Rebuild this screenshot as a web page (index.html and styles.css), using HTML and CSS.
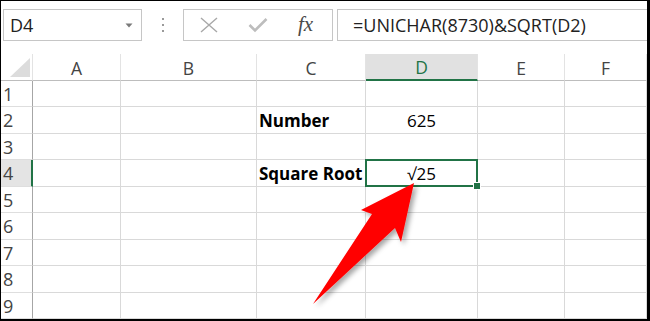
FILE: index.html
```html
<!DOCTYPE html>
<html>
<head>
<meta charset="utf-8">
<link rel="stylesheet" href="styles.css">
</head>
<body>
<div class="frame">
  <div class="app">
    <div class="toolbar">
      <div class="namebox">
        <span class="name">D4</span>
        <svg class="caret" width="8" height="5" viewBox="0 0 8 5"><path d="M0.5 0.5 L7.5 0.5 L4 4.5 Z" fill="#7a7a7a"/></svg>
      </div>
      <div class="dots"><i></i><i></i><i></i></div>
      <div class="fxbox">
        <svg class="ico" width="18" height="16" viewBox="0 0 18 16"><path d="M1 1 L17 15 M17 1 L1 15" stroke="#a8a8a8" stroke-width="1.4" fill="none"/></svg>
        <svg class="ico" width="20" height="16" viewBox="0 0 20 16"><path d="M1.5 8 L7 13.5 L18.5 2" stroke="#bdbdbd" stroke-width="2.6" fill="none"/></svg>
        <span class="fx">fx</span>
      </div>
      <div class="formula">=UNICHAR(8730)&amp;SQRT(D2)</div>
    </div>
    <div class="grid">
      <div class="corner"><span class="tri"></span></div>
      <div class="ch">A</div>
      <div class="ch">B</div>
      <div class="ch">C</div>
      <div class="ch sel">D</div>
      <div class="ch">E</div>
      <div class="ch">F</div>

      <div class="rh">1</div><div class="c"></div><div class="c"></div><div class="c"></div><div class="c"></div><div class="c"></div><div class="c"></div>
      <div class="rh">2</div><div class="c"></div><div class="c"></div><div class="c b">Number</div><div class="c n">625</div><div class="c"></div><div class="c"></div>
      <div class="rh">3</div><div class="c"></div><div class="c"></div><div class="c"></div><div class="c"></div><div class="c"></div><div class="c"></div>
      <div class="rh sel">4</div><div class="c"></div><div class="c"></div><div class="c b">Square Root</div><div class="c n active">√25</div><div class="c"></div><div class="c"></div>
      <div class="rh">5</div><div class="c"></div><div class="c"></div><div class="c"></div><div class="c"></div><div class="c"></div><div class="c"></div>
      <div class="rh">6</div><div class="c"></div><div class="c"></div><div class="c"></div><div class="c"></div><div class="c"></div><div class="c"></div>
      <div class="rh">7</div><div class="c"></div><div class="c"></div><div class="c"></div><div class="c"></div><div class="c"></div><div class="c"></div>
      <div class="rh">8</div><div class="c"></div><div class="c"></div><div class="c"></div><div class="c"></div><div class="c"></div><div class="c"></div>
      <div class="rh">9</div><div class="c"></div><div class="c"></div><div class="c"></div><div class="c"></div><div class="c"></div><div class="c"></div>
    </div>
  </div>
  <svg class="arrow" width="650" height="321" viewBox="0 0 650 321">
    <defs>
      <filter id="sh" x="-20%" y="-20%" width="150%" height="150%">
        <feDropShadow dx="3" dy="3" stdDeviation="2.5" flood-color="#000" flood-opacity="0.35"/>
      </filter>
    </defs>
    <polygon points="414,183 361,210 372,214 313,304 395,228 401,242" fill="#ff0000" filter="url(#sh)"/>
  </svg>
</div>
</body>
</html>
```

FILE: styles.css
```css
* { box-sizing: border-box; }
html, body { margin: 0; padding: 0; }
body { background: #000; width: 650px; height: 321px; overflow: hidden; }

.frame {
  position: relative;
  width: 650px;
  height: 321px;
  padding: 1px 3px 2px 1px;
  background: #000;
}

.app {
  width: 646px;
  height: 318px;
  background: #fff;
  display: flex;
  flex-direction: column;
  overflow: hidden;
  font-family: "Open Sans", sans-serif;
}

.toolbar {
  height: 53px;
  display: flex;
  align-items: flex-start;
  padding-top: 8px;
  padding-left: 2px;
}

.namebox {
  width: 139px;
  height: 32px;
  border: 1px solid #c6c6c6;
  display: flex;
  align-items: center;
  justify-content: space-between;
  padding: 0 8px 0 6px;
  flex: none;
}
.name { font-size: 18px; color: #222; line-height: 1; }
.caret { display: block; }

.dots {
  width: 41px;
  height: 32px;
  display: flex;
  flex-direction: column;
  align-items: center;
  justify-content: center;
  gap: 4px;
  flex: none;
}
.dots i { display: block; width: 2px; height: 2px; background: #9a9a9a; }

.fxbox {
  width: 150px;
  height: 32px;
  border: 1px solid #c6c6c6;
  display: flex;
  align-items: center;
  padding-left: 16px;
  flex: none;
}
.fxbox .ico { display: block; flex: none; }
.fxbox .ico:first-child { margin-right: 30px; }
.fxbox .ico:nth-child(2) { margin-right: 30px; }
.fx {
  font-family: "Liberation Serif", serif;
  font-style: italic;
  font-size: 21px;
  color: #4a4a4a;
  line-height: 1;
  margin-top: -2px;
}

.formula {
  margin-left: 4px;
  flex: 1;
  height: 32px;
  border: 1px solid #c6c6c6;
  border-right: none;
  margin-right: -4px;
  padding-left: 15px;
  font-size: 18px;
  color: #222;
  display: flex;
  align-items: center;
  white-space: nowrap;
}

.grid {
  display: grid;
  grid-template-columns: 32px 88px 136px 109px 112px 87px 1fr;
  grid-template-rows: 27px 26px 27px 26px 27px 26px 27px 26px 27px 26px;
}

.corner {
  position: relative;
  border-right: 1px solid #e3e3e3;
  border-bottom: 1px solid #bdbdbd;
}
.tri {
  position: absolute;
  left: 9px;
  top: 4px;
  width: 0;
  height: 0;
  border-left: 20px solid transparent;
  border-bottom: 19px solid #dcdcdc;
}

.ch {
  border-right: 1px solid #e3e3e3;
  border-bottom: 1px solid #bdbdbd;
  display: flex;
  align-items: center;
  justify-content: center;
  font-size: 17.5px;
  color: #444;
  padding-top: 1px;
}
.ch.sel {
  background: #e1e1e1;
  color: #217346;
  border-bottom: 2px solid #217346;
}

.rh {
  border-right: 1px solid #a6a6a6;
  border-bottom: 1px solid #dedede;
  font-size: 18px;
  color: #444;
  display: flex;
  align-items: center;
  padding-left: 2px;
}
.rh.sel {
  background: #e4e4e4;
  border-right: 2px solid #217346;
}

.c {
  border-right: 1px solid #d9d9d9;
  border-bottom: 1px solid #d9d9d9;
  display: flex;
  align-items: center;
  font-size: 17px;
  color: #000;
  white-space: nowrap;
}
.c.b { font-weight: 700; padding-left: 2px; overflow: visible; }
.c.n { justify-content: center; }

.active { position: relative; }
.active::after {
  content: "";
  position: absolute;
  left: -1px;
  top: -1px;
  right: -1px;
  bottom: -1px;
  border: 2px solid #217346;
}
.active::before {
  content: "";
  position: absolute;
  right: -4px;
  bottom: -4px;
  width: 6px;
  height: 6px;
  background: #217346;
  border: 1px solid #fff;
  z-index: 1;
}

.arrow {
  position: absolute;
  left: 0;
  top: 0;
  pointer-events: none;
}
```
